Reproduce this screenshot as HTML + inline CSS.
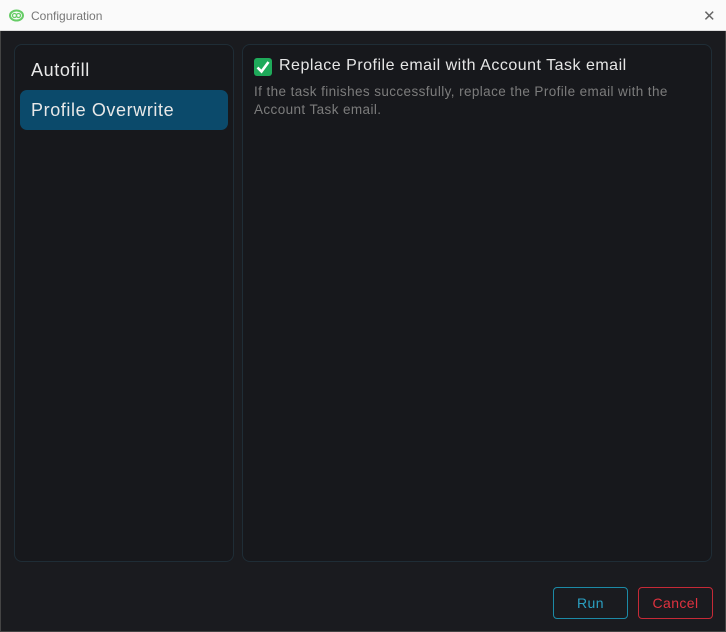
<!DOCTYPE html>
<html><head><style>
*{margin:0;padding:0;box-sizing:border-box}
body{width:726px;height:632px;background:#1a1b1f;font-family:"Liberation Sans",sans-serif;position:relative;overflow:hidden}
.title{position:absolute;left:0;top:0;width:726px;height:31px;background:#fafafa;border-bottom:1px solid #ddd}
.title span{position:absolute;left:31px;top:9px;font-size:12px;color:#777}
.close{position:absolute;left:703px;top:7px;font-size:15px;color:#666}
.frame{position:absolute;left:0;top:31px;width:726px;height:601px;border-left:1px solid #444;border-right:1px solid #444;border-bottom:1px solid #444}
.panel{position:absolute;border:1px solid #1f2d36;border-radius:8px;background:#17181c}
.sel{position:absolute;left:20px;top:90px;width:208px;height:40px;background:#0b4a6b;border-radius:7px}
.item{position:absolute;left:31px;font-size:18px;color:#e8e8e8;letter-spacing:0.6px}
.btn{position:absolute;top:587px;width:75px;height:32px;border-radius:4px;font-size:14px;text-align:center;line-height:30px;letter-spacing:0.4px}
</style></head><body>
<div class="title">
<svg style="position:absolute;left:9px;top:9px" width="15" height="13" viewBox="0 0 15 13"><ellipse cx="7.5" cy="6.5" rx="6.5" ry="5" fill="none" stroke="#6c6" stroke-width="2"/><circle cx="5.5" cy="6.5" r="2" fill="none" stroke="#6c6" stroke-width="1.3"/><circle cx="9.5" cy="6.5" r="2" fill="none" stroke="#6c6" stroke-width="1.3"/></svg>
<span>Configuration</span><div class="close">✕</div></div>
<div class="frame"></div>
<div class="panel" style="left:14px;top:44px;width:220px;height:518px"></div>
<div class="panel" style="left:242px;top:44px;width:470px;height:518px"></div>
<div class="sel"></div>
<div class="item" style="top:60px">Autofill</div>
<div class="item" style="top:100px">Profile Overwrite</div>
<div style="position:absolute;left:254px;top:58px;width:18px;height:18px;background:#1faa5a;border-radius:3px"><svg width="18" height="18" viewBox="0 0 18 18"><path d="M3.5 9.5 L7.5 13.5 L14.5 4" fill="none" stroke="#fff" stroke-width="2.6"/></svg></div>
<div style="position:absolute;left:279px;top:57px;font-size:16px;color:#e6e6e6;letter-spacing:0.5px">Replace Profile email with Account Task email</div>
<div style="position:absolute;left:254px;top:83px;width:445px;font-size:13.5px;line-height:18px;color:#7c7c7c;letter-spacing:0.4px">If the task finishes successfully, replace the Profile email with the Account Task email.</div>
<div class="btn" style="left:553px;border:1px solid #1c8aa6;color:#2a9fc0">Run</div>
<div class="btn" style="left:638px;border:1px solid #c62a37;color:#e0323f">Cancel</div>
</body></html>
